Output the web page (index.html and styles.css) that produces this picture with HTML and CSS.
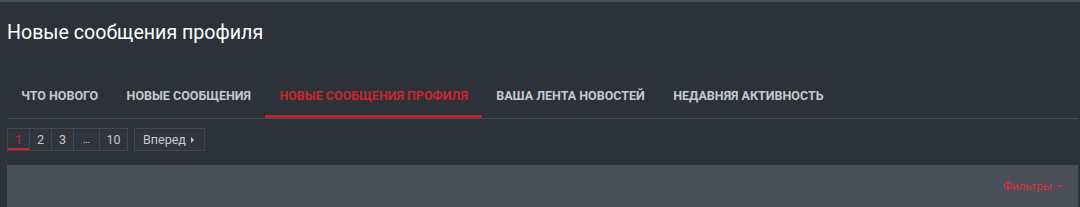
FILE: index.html
```html
<!DOCTYPE html>
<html lang="ru">
  <head>
    <meta charset="UTF-8" />
    <title>Новые сообщения профиля</title>
    <link rel="stylesheet" href="styles.css">
  </head>
  <body>
    <div class="page">
      <h1 class="title">Новые сообщения профиля</h1>
      <div class="tabs">
        <a class="tab">Что нового</a>
        <a class="tab">Новые сообщения</a>
        <a class="tab active">Новые сообщения профиля</a>
        <a class="tab">Ваша лента новостей</a>
        <a class="tab">Недавняя активность</a>
      </div>
      <div class="pagenav">
        <div class="pages">
          <a class="pg current">1</a>
          <a class="pg">2</a>
          <a class="pg">3</a>
          <a class="pg skip">…</a>
          <a class="pg">10</a>
        </div>
        <a class="next">Вперед <span class="arrow-right"></span></a>
      </div>
      <div class="filterbar">
        <a class="filters">Фильтры <span class="arrow-down"></span></a>
      </div>
    </div>
  </body>
</html>
```

FILE: styles.css
```css
* {
  box-sizing: border-box;
  margin: 0;
  padding: 0;
}
body {
  height: 207px;
  overflow: hidden;
  background-color: #2d3139;
  border-top: 2px solid #494d55;
  font-family: Roboto, "Liberation Sans", sans-serif;
  color: #c8cbd0;
}
.page {
  padding: 0 2px 0 7px;
}
.title {
  font-size: 19.6px;
  font-weight: 400;
  color: #ffffff;
  line-height: 24px;
  padding-top: 19px;
  height: 74px;
}
.tabs {
  display: flex;
  border-bottom: 1px solid #454950;
  height: 43px;
}
.tab {
  padding: 0 14.2px;
  font-size: 12.5px;
  font-weight: 700;
  text-transform: uppercase;
  line-height: 40px;
  color: #c6c9ce;
  border-bottom: 3px solid transparent;
}
.tab.active {
  color: #c9272f;
  border-bottom-color: #b5262d;
}
.pagenav {
  display: flex;
  gap: 6px;
  margin-top: 9px;
  height: 23px;
}
.pages {
  display: flex;
  border: 1px solid #43474e;
  background-color: #30343c;
}
.pg {
  min-width: 22px;
  padding: 0 5px;
  font-size: 12.5px;
  line-height: 21px;
  text-align: center;
  color: #c8cbd0;
  border-left: 1px solid #43474e;
}
.pg:first-child {
  min-width: 21px;
  border-left: none;
}
.pg.current {
  color: #c9272f;
  box-shadow: inset 0 -2px 0 #c9272f;
}
.pg.skip {
  min-width: 26px;
  font-size: 11px;
}
.pg:last-child {
  min-width: 28px;
}
.next {
  display: flex;
  align-items: center;
  gap: 5px;
  padding: 0 10px 0 8px;
  font-size: 12.5px;
  border: 1px solid #43474e;
  background-color: #30343c;
  color: #c8cbd0;
}
.arrow-right {
  width: 0;
  height: 0;
  border-top: 3px solid transparent;
  border-bottom: 3px solid transparent;
  border-left: 3px solid #c8cbd0;
}
.filterbar {
  display: flex;
  justify-content: flex-end;
  align-items: center;
  margin-top: 14px;
  height: 42px;
  padding-right: 15px;
  background-color: #4a4f58;
}
.filters {
  display: flex;
  align-items: center;
  gap: 5px;
  font-size: 11.5px;
  color: #d8323c;
}
.arrow-down {
  width: 0;
  height: 0;
  border-left: 3px solid transparent;
  border-right: 3px solid transparent;
  border-top: 3px solid #d8323c;
}
```
